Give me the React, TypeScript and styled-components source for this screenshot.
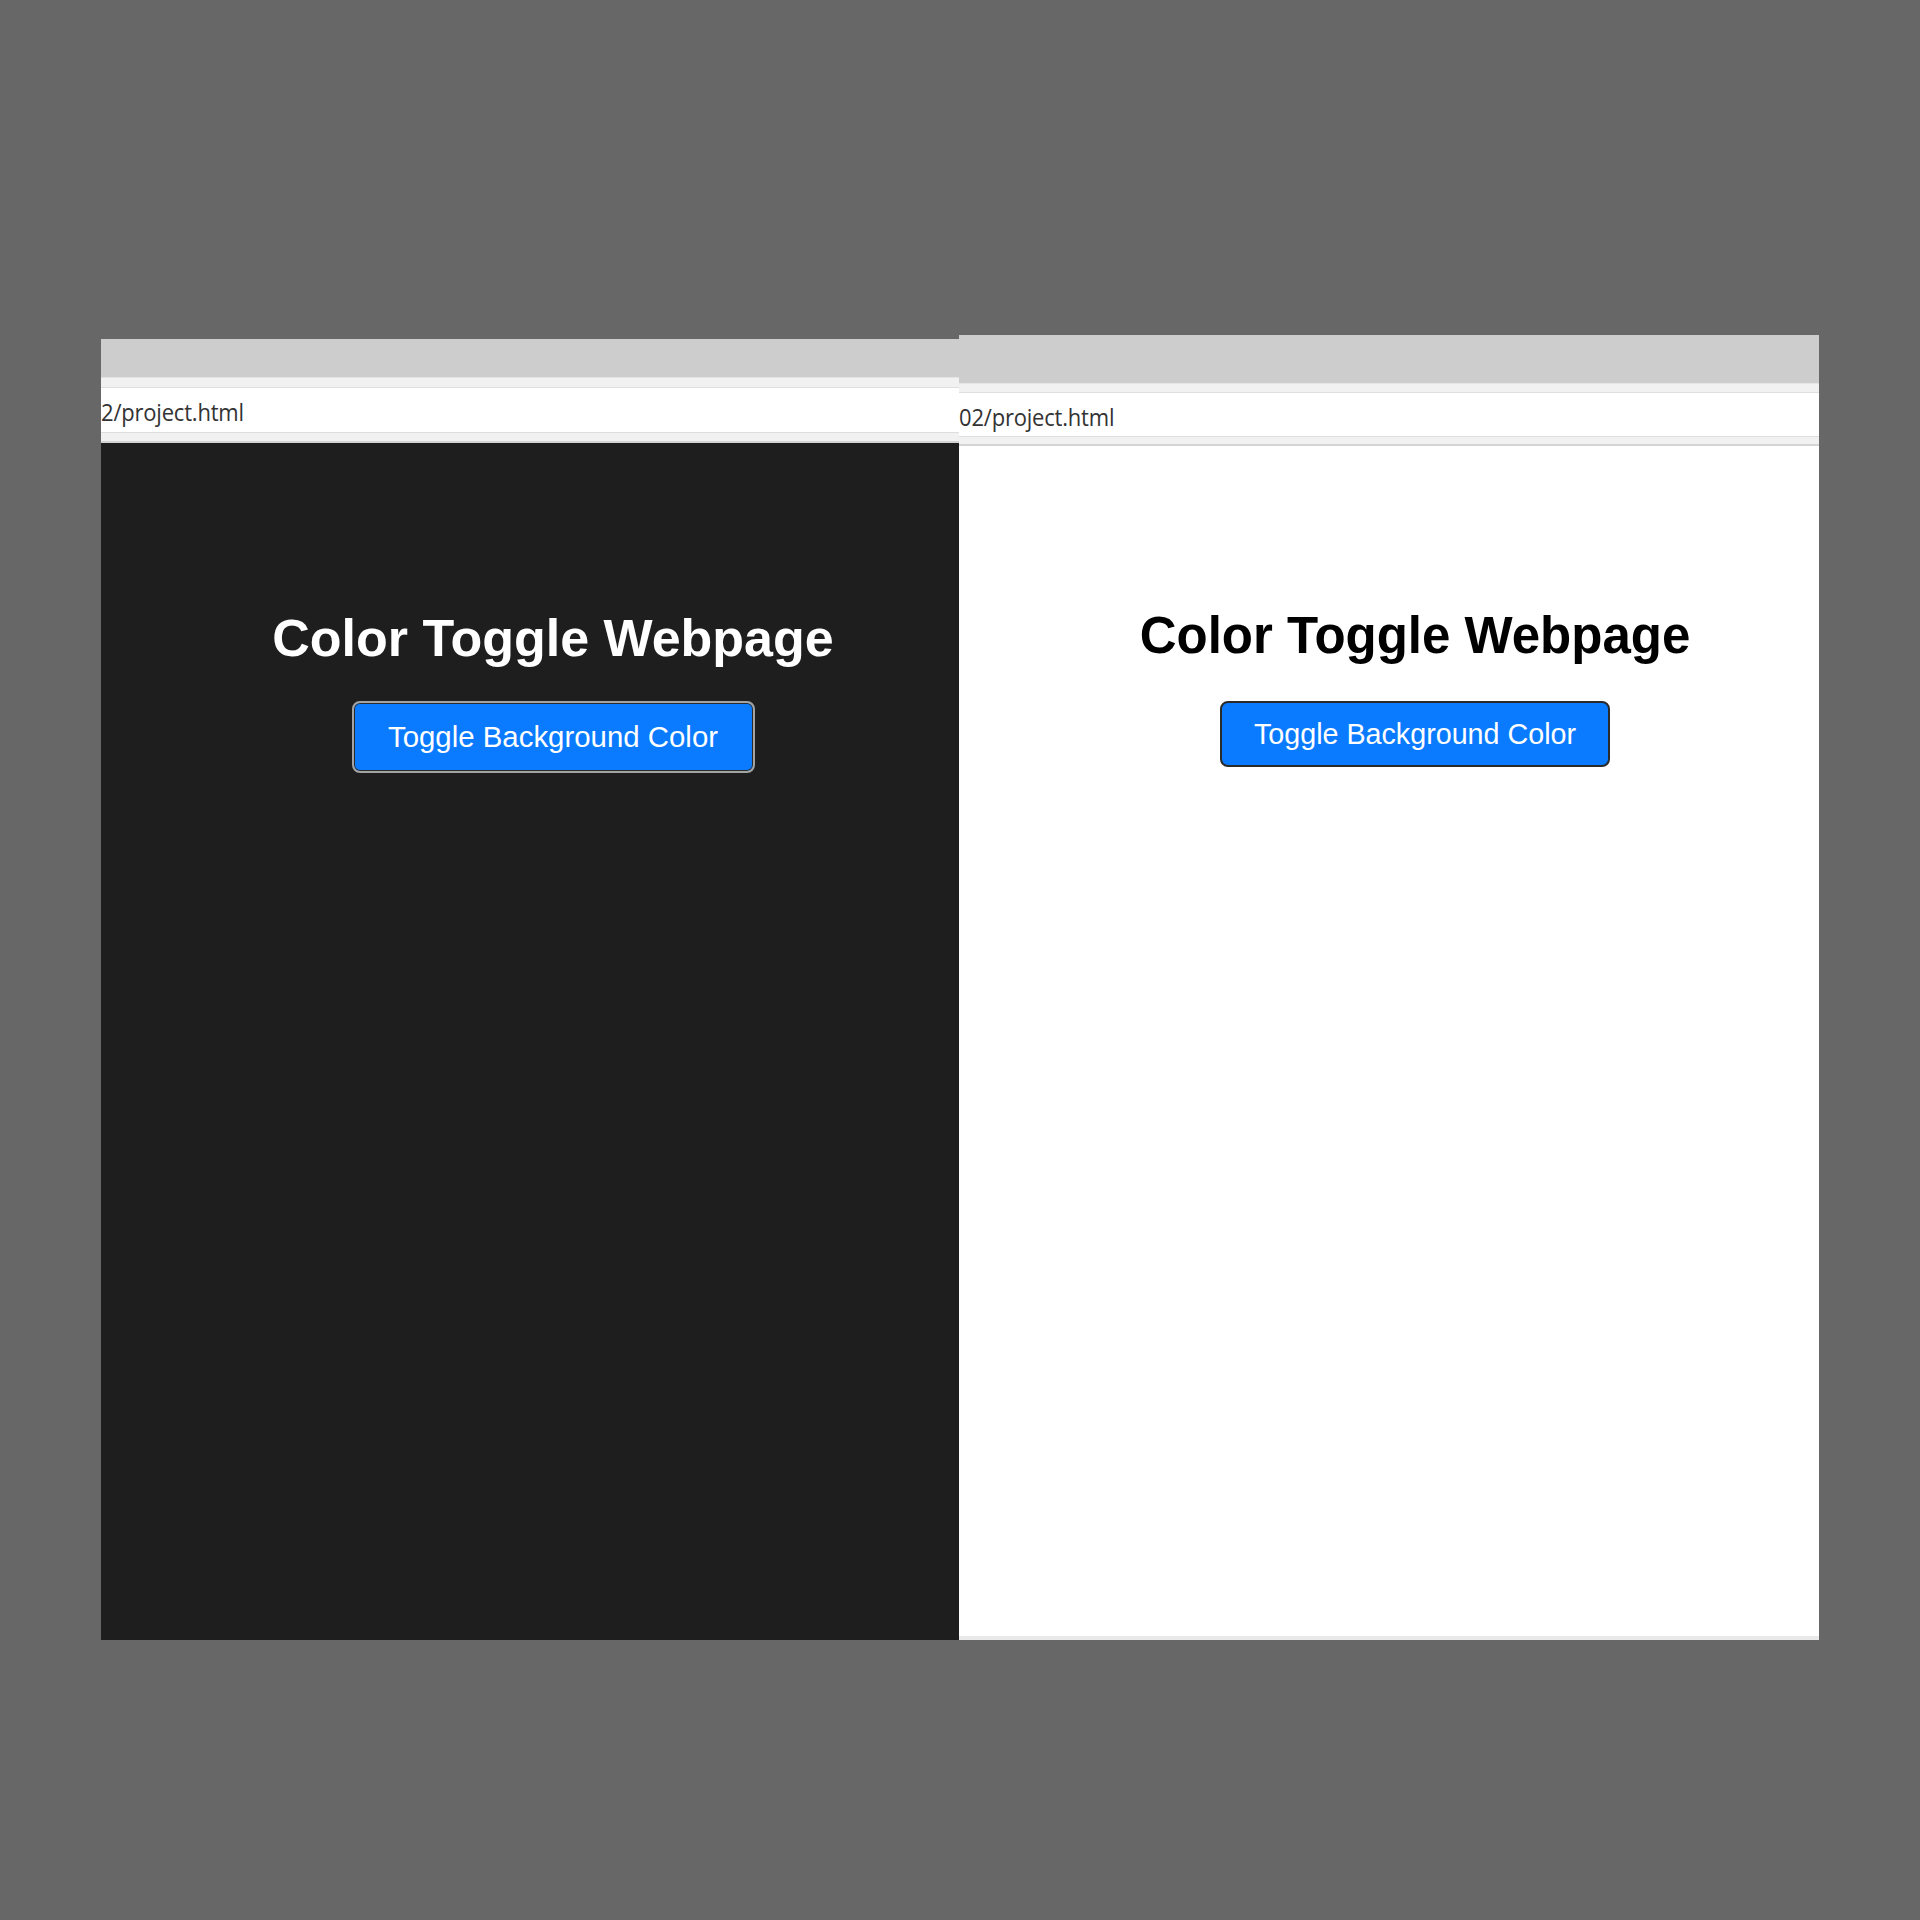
import React, { useState } from "react";
import styled, { createGlobalStyle } from "styled-components";

const GlobalStyle = createGlobalStyle`
  html, body { margin: 0; padding: 0; background: #676767; }
  #root { min-height: 1920px; }
`;

const Page = styled.div`
  width: 1920px;
  height: 1920px;
  box-sizing: border-box;
  padding: 335px 0 0 101px;
  display: flex;
  align-items: flex-start;
  background: #676767;
`;

const Window = styled.section<{ $w: number; $top: number }>`
  width: ${(p) => p.$w}px;
  margin-top: ${(p) => p.$top}px;
  display: flex;
  flex-direction: column;
`;

const TabStrip = styled.div<{ $h: number }>`
  height: ${(p) => p.$h}px;
  background: #cdcdcd;
`;

const Toolbar = styled.div<{ $pt: number; $pb: number }>`
  background: #f1f1f1;
  padding: ${(p) => p.$pt}px 0 ${(p) => p.$pb}px;
  border-top: 1px solid #e4e4e4;
  border-bottom: 2px solid #d4d4d4;
  display: flex;
  flex-direction: column;
`;

const UrlField = styled.div<{ $h: number }>`
  height: ${(p) => p.$h}px;
  background: #ffffff;
  border-top: 1px solid #dedede;
  border-bottom: 1px solid #dedede;
  box-sizing: border-box;
  display: flex;
  align-items: center;
  overflow: hidden;
`;

const UrlText = styled.span`
  display: inline-block;
  font-family: "Open Sans", "Noto Sans", sans-serif;
  font-size: 22px;
  color: #333333;
  letter-spacing: -0.2px;
  white-space: nowrap;
  transform: scaleY(1.08) translateY(1px);
`;

const Content = styled.main<{ $dark: boolean; $h: number; $pt: number; $pl: number }>`
  height: ${(p) => p.$h}px;
  box-sizing: border-box;
  background: ${(p) => (p.$dark ? "#1e1e1e" : "#ffffff")};
  padding: ${(p) => p.$pt}px 0 0 ${(p) => p.$pl}px;
  display: flex;
  flex-direction: column;
  align-items: center;
  border-bottom: ${(p) => (p.$dark ? "none" : "4px solid #e9e9e9")};
`;

const Heading = styled.h1<{ $dark: boolean; $size: number; $gap: number }>`
  margin: 0 0 ${(p) => p.$gap}px;
  font-family: "Liberation Sans", Arial, sans-serif;
  font-weight: 700;
  font-size: ${(p) => p.$size}px;
  line-height: ${(p) => p.$size}px;
  color: ${(p) => (p.$dark ? "#ffffff" : "#000000")};
  white-space: nowrap;
`;

const ToggleButton = styled.button<{ $dark: boolean; $w: number; $h: number }>`
  width: ${(p) => p.$w}px;
  height: ${(p) => p.$h}px;
  box-sizing: border-box;
  background: #0a7bff;
  color: #ffffff;
  border: 2px solid ${(p) => (p.$dark ? "#a3a3a3" : "#2a2a2a")};
  box-shadow: ${(p) => (p.$dark ? "inset 0 0 0 1px #2b2b2b" : "none")};
  border-radius: 8px;
  padding: 0;
  display: flex;
  align-items: center;
  justify-content: center;
  cursor: pointer;
`;

const ButtonLabel = styled.span<{ $size: number }>`
  display: inline-block;
  font-family: "Liberation Sans", Arial, sans-serif;
  font-size: ${(p) => p.$size}px;
  line-height: 1;
  white-space: nowrap;
`;

type PanelProps = {
  dark: boolean;
  width: number;
  top: number;
  tab: number;
  tbTop: number;
  tbBottom: number;
  field: number;
  url: string;
  contentH: number;
  contentPt: number;
  contentPl: number;
  headSize: number;
  headGap: number;
  btnW: number;
  btnH: number;
  btnFont: number;
};

function BrowserPanel(p: PanelProps) {
  const [dark, setDark] = useState(p.dark);
  return (
    <Window $w={p.width} $top={p.top}>
      <TabStrip $h={p.tab} />
      <Toolbar $pt={p.tbTop} $pb={p.tbBottom}>
        <UrlField $h={p.field}>
          <UrlText>{p.url}</UrlText>
        </UrlField>
      </Toolbar>
      <Content $dark={dark} $h={p.contentH} $pt={p.contentPt} $pl={p.contentPl}>
        <Heading $dark={dark} $size={p.headSize} $gap={p.headGap}>
          Color Toggle Webpage
        </Heading>
        <ToggleButton $dark={dark} $w={p.btnW} $h={p.btnH} onClick={() => setDark((d) => !d)}>
          <ButtonLabel $size={p.btnFont}>Toggle Background Color</ButtonLabel>
        </ToggleButton>
      </Content>
    </Window>
  );
}

export default function App() {
  return (
    <>
      <GlobalStyle />
      <Page>
        <BrowserPanel
          dark
          width={858}
          top={4}
          tab={38}
          tbTop={9}
          tbBottom={8}
          field={46}
          url="2/project.html"
          contentH={1197}
          contentPt={169}
          contentPl={46}
          headSize={52}
          headGap={37}
          btnW={403}
          btnH={72}
          btnFont={29.4}
        />
        <BrowserPanel
          dark={false}
          width={860}
          top={0}
          tab={48}
          tbTop={8}
          tbBottom={7}
          field={45}
          url="02/project.html"
          contentH={1194}
          contentPt={164}
          contentPl={52}
          headSize={51}
          headGap={40}
          btnW={390}
          btnH={66}
          btnFont={28.7}
        />
      </Page>
    </>
  );
}
